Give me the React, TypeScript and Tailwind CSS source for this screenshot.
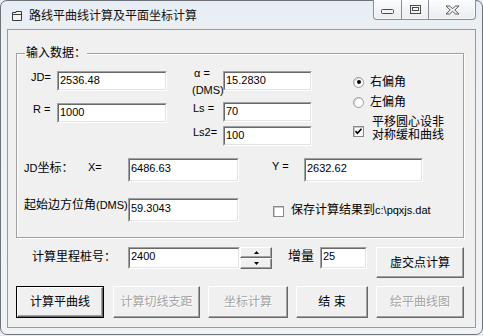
import type { ReactNode } from "react";

// 文本框：经典的凹陷边框
function Field({ value, className, pad = "pt-[1px]" }: { value: string; className: string; pad?: string }) {
  return (
    <div
      className={`box-border shrink-0 border border-t-[#a0a0a0] border-l-[#a0a0a0] border-r-white border-b-white ${className}`}
    >
      <div
        className={`box-border h-full w-full border border-t-[#696969] border-l-[#696969] border-r-[#e3e3e3] border-b-[#e3e3e3] bg-white pl-[1px] text-[11px] leading-[13px] ${pad}`}
      >
        {value}
      </div>
    </div>
  );
}

// 按钮：凸起边框，默认按钮多一圈黑框
function Btn({
  children,
  className,
  disabled,
  primary,
}: {
  children: ReactNode;
  className: string;
  disabled?: boolean;
  primary?: boolean;
}) {
  const face = (
    <div
      className={`box-border flex h-full w-full items-center justify-center border border-t-white border-l-white border-r-[#696969] border-b-[#696969] bg-[#f0f0f0] text-[12px] leading-[14px] shadow-[inset_-1px_-1px_0_#a0a0a0] ${
        disabled ? "text-[#a3a3a3] [text-shadow:1px_1px_0_#ffffff]" : "text-black"
      }`}
    >
      {children}
    </div>
  );
  return (
    <div className={`box-border shrink-0 ${primary ? "border border-black" : ""} ${className}`}>{face}</div>
  );
}

function Radio({ checked }: { checked?: boolean }) {
  return (
    <div className="box-border flex h-[11px] w-[11px] shrink-0 items-center justify-center rounded-full border border-[#9a9a9a] bg-white shadow-[inset_1px_1px_0_#d8d8d8]">
      {checked && <div className="h-[4px] w-[4px] rounded-full bg-black" />}
    </div>
  );
}

function Check({ checked, className }: { checked?: boolean; className?: string }) {
  return (
    <div
      className={`box-border h-[11px] w-[11px] shrink-0 border border-[#8a8a8a] bg-white shadow-[inset_1px_1px_0_#c8c8c8] ${
        className ?? ""
      }`}
    >
      {checked && (
        <svg width="9" height="9" viewBox="0 0 9 9" className="block">
          <path d="M1.5 4.2 L3.5 6.3 L7.5 1.8" stroke="#000" strokeWidth="1.7" fill="none" />
        </svg>
      )}
    </div>
  );
}

function TitleButtons() {
  return (
    <div className="-mt-[1px] mr-[6px] ml-auto flex h-[20px] rounded-b-[4px] border border-t-0 border-[#8a8f96] bg-[linear-gradient(#fbfcfd,#e9edf1)] shadow-[inset_0_0_0_1px_rgba(255,255,255,0.7)]">
      <div className="flex w-[27px] items-center justify-center pt-[4px]">
        <svg width="13" height="5" viewBox="0 0 13 5">
          <rect x="0.5" y="0.5" width="12" height="4" rx="1" fill="#f4f4f4" stroke="#4a4a4a" />
        </svg>
      </div>
      <div className="w-[1px] bg-[#8a8f96]" />
      <div className="flex w-[26px] items-center justify-center">
        <svg width="11" height="9" viewBox="0 0 11 9">
          <rect x="0.5" y="0.5" width="10" height="8" fill="#f4f4f4" stroke="#4a4a4a" />
          <rect x="2.5" y="2.5" width="6" height="3" fill="none" stroke="#4a4a4a" />
        </svg>
      </div>
      <div className="w-[1px] bg-[#8a8f96]" />
      <div className="flex w-[46px] items-center justify-center">
        <svg width="15" height="10" viewBox="0 0 15 10">
          <path
            d="M1 1 H4.5 L7.5 3.6 L10.5 1 H14 L9.8 5 L14 9 H10.5 L7.5 6.4 L4.5 9 H1 L5.2 5 Z"
            fill="#f4f4f4"
            stroke="#4a4a4a"
            strokeWidth="0.9"
            strokeLinejoin="round"
          />
        </svg>
      </div>
    </div>
  );
}

export default function App() {
  return (
    <div className="h-[336px] w-[483px] overflow-hidden bg-[#e8edf2] font-['Liberation_Sans','Noto_Sans_CJK_SC',sans-serif] text-black">
      <div className="box-border flex h-[335px] w-[483px] flex-col rounded-[7px] border border-[#6f7378] bg-[linear-gradient(180deg,#e6edf4_0%,#eef1f4_12%,#f1f2f3_100%)]">
        {/* 标题栏 */}
        <div className="flex h-[28px] shrink-0 items-start">
          <svg width="10" height="10" viewBox="0 0 10 10" className="mt-[10px] ml-[11px] shrink-0">
            <path d="M0.5 1.5 H4 V0.5 H9.5 V9.5 H0.5 Z" fill="#f2f2f2" stroke="#3a3a3a" />
            <path d="M0.5 3.5 H9.5" stroke="#3a3a3a" />
          </svg>
          <span className="mt-[8px] ml-[7px] text-[12px] leading-[14px] text-[#111]">路线平曲线计算及平面坐标计算</span>
          <TitleButtons />
        </div>

        {/* 客户区 */}
        <div className="ml-[6px] box-border h-[299px] w-[469px] shrink-0 border border-[#979a9e] bg-[#f0f0f0]">
          {/* 输入数据 分组框 */}
          <div className="relative mt-[23px] ml-[8px] box-border h-[185px] w-[448px] border border-[#a0a0a0] shadow-[inset_1px_1px_0_#ffffff,1px_1px_0_#ffffff]">
            <div className="absolute -top-[8px] left-[8px] bg-[#f0f0f0] px-[1px] text-[12px] leading-[14px]">输入数据：</div>

            {/* 第一区 */}
            <div className="mt-[16px] ml-[14px] flex h-[78px]">
              <div className="flex flex-col">
                <div className="mt-[1px] flex h-[20px]">
                  <div className="w-[26px] text-[11px] leading-[13px]">JD=</div>
                  <Field value="2536.48" className="h-[20px] w-[110px]" />
                </div>
                <div className="mt-[12px] flex h-[20px]">
                  <div className="w-[26px] pl-[2px] text-[11px] leading-[13px]">R =</div>
                  <Field value="1000" className="h-[20px] w-[110px]" />
                </div>
              </div>

              <div className="ml-[26px] flex flex-col">
                <div className="mt-[1px] flex h-[20px]">
                  <div className="-mt-[4px] w-[30px] text-[11px] leading-[13px]">
                    <div className="h-[17px] pl-[1px]">α =</div>
                    <div className="-ml-[1px] whitespace-nowrap">(DMS)</div>
                  </div>
                  <Field value="15.2830" className="h-[20px] w-[89px]" />
                </div>
                <div className="mt-[11px] flex h-[20px]">
                  <div className="w-[30px] text-[11px] leading-[13px]">Ls =</div>
                  <Field value="70" className="h-[20px] w-[89px]" />
                </div>
                <div className="mt-[4px] flex h-[20px]">
                  <div className="w-[30px] text-[11px] leading-[13px]">Ls2=</div>
                  <Field value="100" className="h-[20px] w-[89px]" />
                </div>
              </div>

              <div className="ml-[41px] flex flex-col text-[12px]">
                <div className="mt-[4px] flex h-[16px] items-center">
                  <Radio checked />
                  <span className="ml-[6px] leading-[14px]">右偏角</span>
                </div>
                <div className="mt-[4px] flex h-[16px] items-center">
                  <Radio />
                  <span className="ml-[6px] leading-[14px]">左偏角</span>
                </div>
                <div className="mt-[6px] flex items-start">
                  <Check checked className="mt-[10px]" />
                  <div className="ml-[8px] leading-[13px]">
                    <div>平移圆心设非</div>
                    <div>对称缓和曲线</div>
                  </div>
                </div>
              </div>
            </div>

            {/* JD坐标 */}
            <div className="mt-[10px] ml-[7px] flex h-[24px] items-start">
              <div className="w-[64px] pt-[3px] text-[12px] leading-[14px]">
                <span className="text-[11px]">JD</span>坐标：
              </div>
              <div className="w-[40px] pt-[3px] text-[11px] leading-[13px]">X=</div>
              <Field value="6486.63" className="h-[24px] w-[111px]" pad="pt-[2px]" />
              <div className="ml-[33px] w-[32px] pt-[2px] text-[11px] leading-[13px]">Y =</div>
              <Field value="2632.62" className="h-[24px] w-[119px]" pad="pt-[2px]" />
            </div>

            {/* 起始边方位角 */}
            <div className="mt-[16px] ml-[7px] flex h-[24px] items-start">
              <div className="w-[104px] whitespace-nowrap text-[12px] leading-[14px]">
                起始边方位角<span className="text-[11px]">(DMS)</span>
              </div>
              <Field value="59.3043" className="h-[24px] w-[111px]" pad="pt-[2px]" />
              <Check className="mt-[8px] ml-[34px]" />
              <div className="ml-[7px] pt-[5px] whitespace-nowrap text-[12px] leading-[14px]">
                保存计算结果到<span className="text-[11px]">c:\pqxjs.dat</span>
              </div>
            </div>
          </div>

          {/* 里程桩号 */}
          <div className="mt-[9px] flex items-start">
            <div className="ml-[24px] w-[96px] pt-[3px] text-[12px] leading-[14px]">计算里程桩号：</div>
            <Field value="2400" className="h-[22px] w-[112px]" />
            <div className="flex h-[22px] w-[32px] shrink-0 flex-col">
              <Btn className="h-[11px] w-[32px]">
                <svg width="5" height="3" viewBox="0 0 5 3">
                  <path d="M0 3 L2.5 0 L5 3 Z" fill="#000" />
                </svg>
              </Btn>
              <Btn className="h-[11px] w-[32px]">
                <svg width="5" height="3" viewBox="0 0 5 3">
                  <path d="M0 0 L2.5 3 L5 0 Z" fill="#000" />
                </svg>
              </Btn>
            </div>
            <div className="ml-[16px] w-[32px] pt-[1px] text-[13px] leading-[16px]">增量</div>
            <Field value="25" className="h-[22px] w-[47px]" />
            <Btn className="ml-[9px] h-[31px] w-[88px]">虚交点计算</Btn>
          </div>

          {/* 按钮行 */}
          <div className="mt-[8px] flex">
            <Btn primary className="ml-[8px] h-[32px] w-[88px]">
              计算平曲线
            </Btn>
            <Btn disabled className="ml-[9px] h-[32px] w-[87px]">
              计算切线支距
            </Btn>
            <Btn disabled className="ml-[8px] h-[32px] w-[80px]">
              坐标计算
            </Btn>
            <Btn className="ml-[8px] h-[32px] w-[72px]">
              <span className="whitespace-pre">结 束</span>
            </Btn>
            <Btn disabled className="ml-[8px] h-[32px] w-[88px]">
              绘平曲线图
            </Btn>
          </div>
        </div>
      </div>
    </div>
  );
}
